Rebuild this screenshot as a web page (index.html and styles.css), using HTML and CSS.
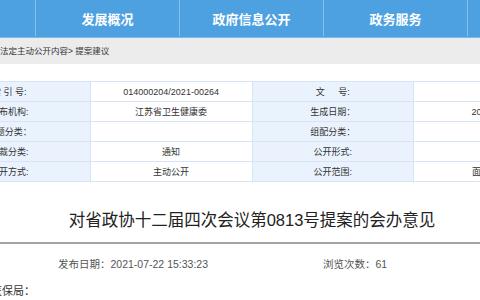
FILE: index.html
```html
<!DOCTYPE html>
<html lang="zh-CN">
  <head>
    <meta charset="UTF-8" />
    <meta name="viewport" content="width=device-width, initial-scale=1.0" />
    <title>对省政协十二届四次会议第0813号提案的会办意见</title>
    <link rel="stylesheet" href="styles.css">
  </head>
  <body>
    <div class="nav">
      <div class="nav-inner">
        <a class="nav-item"></a>
        <a class="nav-item">发展概况</a>
        <a class="nav-item">政府信息公开</a>
        <a class="nav-item">政务服务</a>
        <a class="nav-item"></a>
      </div>
    </div>

    <div class="crumb">
      <div class="page">法定主动公开内容&gt; 提案建议</div>
    </div>

    <div class="page">
      <table class="meta">
        <tr>
          <td class="label">索 引 号:</td>
          <td>014000204/2021-00264</td>
          <td class="label">文&emsp;&ensp;号:</td>
          <td></td>
        </tr>
        <tr>
          <td class="label">发布机构:</td>
          <td>江苏省卫生健康委</td>
          <td class="label">生成日期：</td>
          <td>2021-07-22</td>
        </tr>
        <tr>
          <td class="label">主题分类：</td>
          <td></td>
          <td class="label">组配分类：</td>
          <td></td>
        </tr>
        <tr>
          <td class="label">体裁分类:</td>
          <td>通知</td>
          <td class="label">公开形式:</td>
          <td></td>
        </tr>
        <tr>
          <td class="label">公开方式:</td>
          <td>主动公开</td>
          <td class="label">公开范围:</td>
          <td>面向全社会</td>
        </tr>
      </table>

      <h1 class="title">对省政协十二届四次会议第0813号提案的会办意见</h1>

      <div class="info">
        <span class="date">发布日期：2021-07-22 15:33:23</span>
        <span>浏览次数：61</span>
      </div>

      <p class="text">省医保局：</p>
    </div>
  </body>
</html>
```

FILE: styles.css
```css
* {
  box-sizing: border-box;
}

html,
body {
  overflow: hidden;
}

body {
  margin: 0;
  font-family: "Liberation Sans", "Noto Sans CJK SC", sans-serif;
  color: #333;
  background: #fff;
}

.nav {
  height: 38px;
  background: #4ea1e1;
  border-bottom: 1px solid #7db9ea;
}

.nav-inner {
  display: flex;
  margin-left: -108px;
}

.nav-item {
  flex: 0 0 144px;
  height: 36px;
  line-height: 40px;
  text-align: center;
  color: #fff;
  font-size: 13px;
  font-weight: bold;
  border-right: 1px solid #86bfec;
}

.page {
  width: 648px;
  margin-left: -72px;
}

.crumb {
  height: 26px;
  background: #ececec;
}

.crumb .page {
  padding-left: 72px;
  font-size: 8.5px;
  line-height: 26px;
}

.meta {
  width: 648px;
  margin-top: 17px;
  table-layout: fixed;
  border-collapse: collapse;
}

.meta td {
  height: 20px;
  padding: 0;
  border: 1px solid #d6e4f5;
  text-align: center;
  font-size: 9px;
  color: #333;
}

.meta .label {
  background: #eaf2fd;
}

.title {
  margin: 26px 0 0;
  padding-bottom: 10px;
  border-bottom: 2px solid #a3a3a3;
  font-size: 16.5px;
  line-height: 24px;
  font-weight: normal;
  text-align: center;
  color: #222;
}

.info {
  display: flex;
  margin-top: 13px;
  padding-left: 130px;
  font-size: 10.5px;
  line-height: 14px;
  color: #555;
}

.info .date {
  width: 265px;
}

.text {
  margin: 12px 0 0;
  padding-left: 52px;
  font-size: 11px;
  line-height: 16px;
}
```
